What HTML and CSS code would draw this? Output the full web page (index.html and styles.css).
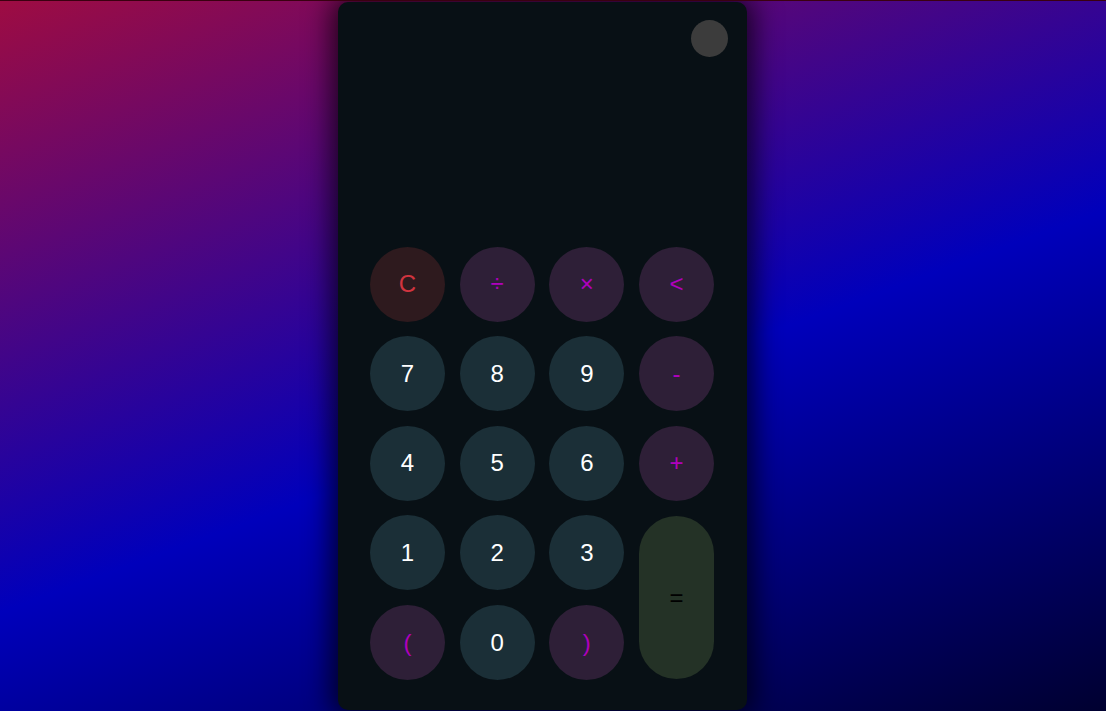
FILE: index.html
```html
<!DOCTYPE html>
<html>
<head>
<meta charset="utf-8">
<link rel="stylesheet" href="styles.css">
</head>
<body>
<div class="page">
  <div class="calc">
    <div class="top">
      <button class="toggle" aria-label="theme"></button>
    </div>
    <div class="display"></div>
    <div class="keys">
      <button class="key clear">C</button>
      <button class="key op">÷</button>
      <button class="key op">×</button>
      <button class="key op">&lt;</button>
      <button class="key num">7</button>
      <button class="key num">8</button>
      <button class="key num">9</button>
      <button class="key op">-</button>
      <button class="key num">4</button>
      <button class="key num">5</button>
      <button class="key num">6</button>
      <button class="key op">+</button>
      <button class="key num">1</button>
      <button class="key num">2</button>
      <button class="key num">3</button>
      <button class="key eq">=</button>
      <button class="key op">(</button>
      <button class="key num">0</button>
      <button class="key op">)</button>
    </div>
  </div>
</div>
</body>
</html>
```

FILE: styles.css
```css
* { box-sizing: border-box; }
html, body { margin: 0; padding: 0; height: 100%; }
body {
  font-family: "Liberation Sans", Arial, sans-serif;
  background: linear-gradient(160deg, #9e0c42 0%, #0000bb 55%, #000030 100%);
  border-top: 1px solid #3a0010;
  overflow: hidden;
}
.page {
  height: 710px;
  display: flex;
  justify-content: center;
  padding-top: 1px;
  padding-right: 21px;
}
.calc {
  width: 409px;
  height: 708px;
  background: #081015;
  border-radius: 10px;
  box-shadow: 0 0 28px 6px rgba(0, 0, 0, 0.75);
  display: flex;
  flex-direction: column;
  padding: 18px 19px 30px 19px;
}
.top {
  display: flex;
  justify-content: flex-end;
}
.toggle {
  width: 37px;
  height: 37px;
  border-radius: 50%;
  border: none;
  background: #3c3c3c;
  padding: 0;
}
.display { flex: 1; }
.keys {
  display: grid;
  grid-template-columns: repeat(4, 75px);
  grid-auto-rows: 75px;
  column-gap: 14.67px;
  row-gap: 14.6px;
  margin: 0 14px 0 13px;
}
.key {
  border: none;
  border-radius: 50%;
  font-family: "Liberation Sans", Arial, sans-serif;
  font-size: 24px;
  display: flex;
  align-items: center;
  justify-content: center;
  padding: 0;
}
.num { background: #1b2f37; color: #ffffff; }
.op { background: #2e1f37; color: #b000bd; }
.clear { background: #2e1a1e; color: #d1343f; }
.eq {
  grid-column: 4;
  grid-row: 4 / span 2;
  border-radius: 38px;
  background: #243226;
  color: #000000;
  height: 163px;
  align-self: center;
}
```
